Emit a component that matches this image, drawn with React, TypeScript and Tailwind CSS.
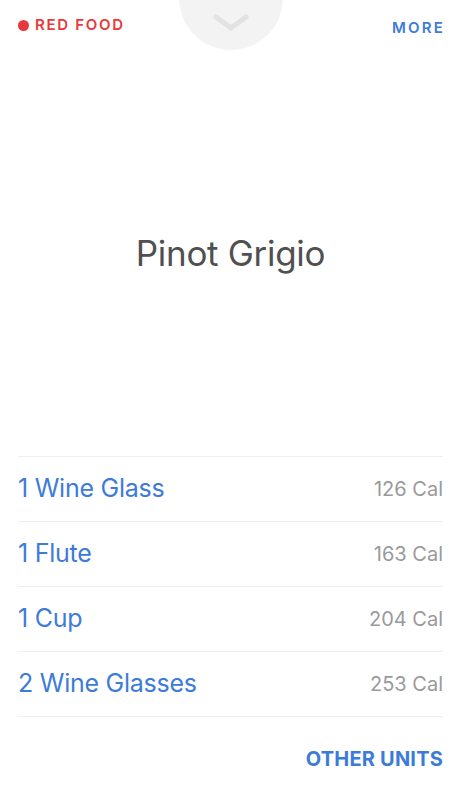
import React from "react";

const rows = [
  { unit: "1 Wine Glass", cal: "126 Cal" },
  { unit: "1 Flute", cal: "163 Cal" },
  { unit: "1 Cup", cal: "204 Cal" },
  { unit: "2 Wine Glasses", cal: "253 Cal" },
];

export default function App() {
  return (
    <div
      className="w-[461px] h-[800px] bg-white flex flex-col overflow-hidden"
      style={{ fontFamily: 'Inter, "Noto Sans", sans-serif' }}
    >
      <div className="relative h-[50px] flex items-start justify-between px-[18px] shrink-0">
        <div className="absolute left-[179px] top-[-54px] w-[104px] h-[104px] rounded-full bg-[#f3f3f3] flex items-end justify-center pb-[18px]">
          <svg width="36" height="18" viewBox="0 0 36 18">
            <path d="M3 3 L18 14 L33 3" fill="none" stroke="#e2e2e2" strokeWidth="5" strokeLinecap="round" strokeLinejoin="round" />
          </svg>
        </div>
        <div className="flex items-center gap-[6px] mt-[15px]">
          <span className="w-[11px] h-[11px] rounded-full bg-[#e8383b]" />
          <span className="text-[15px] leading-[20px] font-semibold tracking-[1.7px] text-[#e8383b]">RED FOOD</span>
        </div>
        <span className="mt-[18px] text-[15px] leading-[20px] font-semibold tracking-[2.2px] text-[#3d7bd9] mr-[-2px]">MORE</span>
      </div>
      <div className="h-[406px] flex items-center justify-center shrink-0">
        <h1 className="text-[35px] font-normal text-[#505050] tracking-[-0.3px]">Pinot Grigio</h1>
      </div>
      <div className="mx-[18px] border-t border-[#eeeeee]">
        {rows.map((r) => (
          <div key={r.unit} className="h-[65px] flex items-center justify-between border-b border-[#eeeeee]">
            <span className="text-[25px] text-[#3d7bd9] tracking-[-0.25px]">{r.unit}</span>
            <span className="text-[20px] text-[#9a9a9a]">{r.cal}</span>
          </div>
        ))}
      </div>
      <div className="flex justify-end px-[18px] mt-[28px]">
        <span className="text-[20px] leading-[28px] font-bold tracking-[0.2px] text-[#3d7bd9]">OTHER UNITS</span>
      </div>
    </div>
  );
}
